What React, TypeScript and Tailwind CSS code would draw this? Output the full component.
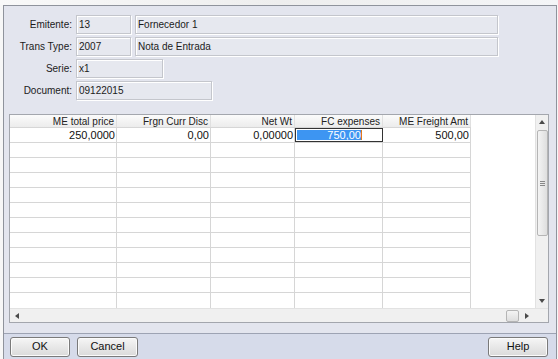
import React from "react";

type Col = { w: string; head: string; value: string; selected?: boolean };

const cols: Col[] = [
  { w: "w-[107px]", head: "ME total price", value: "250,0000" },
  { w: "w-[94px]", head: "Frgn Curr Disc", value: "0,00" },
  { w: "w-[84px]", head: "Net Wt", value: "0,00000" },
  { w: "w-[88px]", head: "FC expenses", value: "750,00", selected: true },
  { w: "w-[88px]", head: "ME Freight Amt", value: "500,00" },
];

const emptyRows = Array.from({ length: 11 }, (_, i) => i);

function Field({ w, value }: { w: string; value: string }) {
  return (
    <div
      className={`${w} h-[19px] border border-[#c4c6cc] shadow-[inset_1px_1px_0_#ffffff,1px_1px_0_#ffffff] bg-[#e6e8ef] flex items-center pl-[2px] text-[10px] text-[#1b1b1b]`}
    >
      {value}
    </div>
  );
}

function Label({ text }: { text: string }) {
  return <div className="w-[69px] text-right text-[10px] text-[#1b1b1b] pr-[1px]">{text}</div>;
}

function Arrow({ dir }: { dir: "up" | "down" | "left" | "right" }) {
  const pts = {
    up: "1,5 4,1 7,5",
    down: "1,2 4,6 7,2",
    left: "5,1 1,4 5,7",
    right: "2,1 6,4 2,7",
  }[dir];
  return (
    <svg width="8" height="8" viewBox="0 0 8 8">
      <polygon points={pts} fill="#4a4a4a" />
    </svg>
  );
}

function Button({ label, w }: { label: string; w: string }) {
  return (
    <button
      className={`${w} h-[20px] rounded-[3px] border border-[#7a7a7a] bg-gradient-to-b from-[#f6f6f6] to-[#dadada] shadow-[inset_0_0_0_1px_#fbfbfb] text-[11px] text-[#111]`}
    >
      {label}
    </button>
  );
}

export default function App() {
  return (
    <div className="w-[558px] h-[359px] bg-[#f7f7f7] overflow-hidden flex flex-col font-['Liberation_Sans',Arial,sans-serif]">
      <div className="h-[5px] bg-gradient-to-r from-[#f9f9f9] via-[#eeeeee] to-[#f4f5f7]" />

      <div className="flex-1 ml-[3px] mr-[1px] border-l border-t border-r border-[#8f939c] flex flex-col">
        {/* form */}
        <div className="flex-1 bg-[#e3e5ee] flex flex-col">
          <div className="flex flex-col gap-[3px] pt-[9px]">
            <div className="flex items-center gap-[3px]">
              <Label text="Emitente:" />
              <Field w="w-[55px]" value="13" />
              <div className="ml-[1px]">
                <Field w="w-[363px]" value="Fornecedor 1" />
              </div>
            </div>
            <div className="flex items-center gap-[3px]">
              <Label text="Trans Type:" />
              <Field w="w-[55px]" value="2007" />
              <div className="ml-[1px]">
                <Field w="w-[363px]" value="Nota de Entrada" />
              </div>
            </div>
            <div className="flex items-center gap-[3px]">
              <Label text="Serie:" />
              <Field w="w-[87px]" value="x1" />
            </div>
            <div className="flex items-center gap-[3px]">
              <Label text="Document:" />
              <Field w="w-[136px]" value="09122015" />
            </div>
          </div>

          {/* table */}
          <div className="mt-[14px] ml-[5px] w-[540px] h-[209px] border border-[#a3a6ad] bg-white flex flex-col">
            <div className="flex flex-1">
              <div className="flex-1 flex">
                <div className="flex flex-col">
                  <div className="flex h-[13px] bg-gradient-to-b from-[#fbfbfb] to-[#ececec] border-b border-[#d6d6d6]">
                    {cols.map((c) => (
                      <div
                        key={c.head}
                        className={`${c.w} border-r border-[#e0e0e0] text-right pr-[2px] text-[10px] leading-[13px] text-[#222]`}
                      >
                        {c.head}
                      </div>
                    ))}
                  </div>
                  <div className="flex h-[15px] border-b border-[#d6d6d6]">
                    {cols.map((c) =>
                      c.selected ? (
                        <div key={c.head} className={`${c.w} border border-[#333] flex items-stretch p-[1px]`}>
                          <div className="flex-1 bg-[#3d95f2] text-right text-white text-[11px] leading-[11px]">
                            {c.value}
                          </div>
                          <div className="w-[1px] bg-[#e07a1a]" />
                          <div className="w-[19px]" />
                        </div>
                      ) : (
                        <div
                          key={c.head}
                          className={`${c.w} border-r border-[#d6d6d6] text-right pr-[1px] text-[11px] leading-[14px] text-[#111]`}
                        >
                          {c.value}
                        </div>
                      )
                    )}
                  </div>
                  {emptyRows.map((r) => (
                    <div key={r} className={`flex h-[15px] ${r < 10 ? "border-b border-[#d6d6d6]" : ""}`}>
                      {cols.map((c) => (
                        <div key={c.head} className={`${c.w} border-r border-[#d6d6d6]`} />
                      ))}
                    </div>
                  ))}
                </div>
                <div className="flex-1 bg-white" />
              </div>

              {/* vertical scrollbar */}
              <div className="w-[13px] bg-[#f0f0f0] border-l border-[#e2e2e2] flex flex-col items-center">
                <div className="h-[15px] flex items-center justify-center">
                  <Arrow dir="up" />
                </div>
                <div className="w-[11px] h-[106px] rounded-[2px] border border-[#b5b5b5] bg-gradient-to-r from-[#f4f4f4] to-[#dedede] flex flex-col items-center justify-center gap-[1px]">
                  <div className="w-[5px] h-[1px] bg-[#888]" />
                  <div className="w-[5px] h-[1px] bg-[#888]" />
                  <div className="w-[5px] h-[1px] bg-[#888]" />
                </div>
                <div className="flex-1" />
                <div className="h-[15px] flex items-center justify-center">
                  <Arrow dir="down" />
                </div>
              </div>
            </div>

            {/* horizontal scrollbar */}
            <div className="h-[14px] flex bg-[#f0f0f0] border-t border-[#e2e2e2]">
              <div className="flex-1 flex items-center">
                <div className="w-[15px] flex justify-center">
                  <Arrow dir="left" />
                </div>
                <div className="flex-1" />
                <div className="w-[13px] h-[12px] rounded-[2px] border border-[#b5b5b5] bg-gradient-to-b from-[#f4f4f4] to-[#dedede]" />
                <div className="w-[16px] flex justify-center">
                  <Arrow dir="right" />
                </div>
              </div>
              <div className="w-[13px] bg-[#f0f0f0]" />
            </div>
          </div>

          <div className="flex-1" />
        </div>

        {/* buttons */}
        <div className="h-[26px] border-t border-[#9da3b3] bg-[#d6dbea] flex items-center pl-[6px] pr-[8px] gap-[7px]">
          <Button label="OK" w="w-[60px]" />
          <Button label="Cancel" w="w-[61px]" />
          <div className="flex-1" />
          <Button label="Help" w="w-[60px]" />
        </div>
      </div>
    </div>
  );
}
